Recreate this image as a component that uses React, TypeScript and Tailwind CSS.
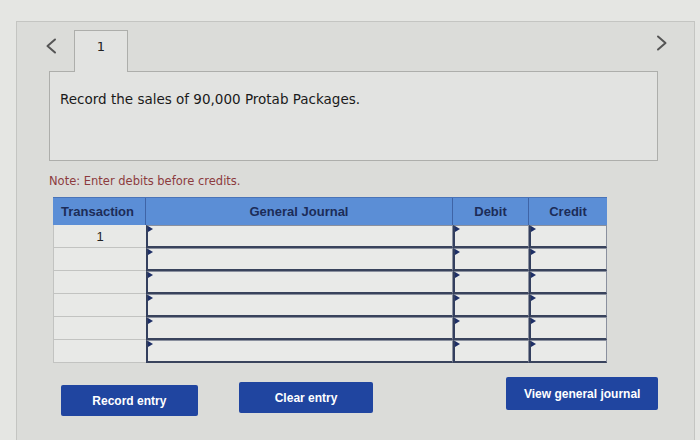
import React from "react";

const Tri = () => (
  <span className="absolute left-0 top-0 w-0 h-0 border-t-[3px] border-b-[3px] border-l-[5px] border-t-transparent border-b-transparent border-l-[#1e2f66]" />
);

function InputCell({ w }: { w: string }) {
  return (
    <div className={`${w} relative h-full bg-[#e9eae8] border-l-2 border-b-2 border-t border-r border-l-[#333f5e] border-b-[#39435c] border-t-[#8a909e] border-r-[#8a909e]`}>
      <Tri />
    </div>
  );
}

export default function App() {
  const rows = [0, 1, 2, 3, 4, 5];
  return (
    <div className="w-[700px] h-[440px] bg-[#e5e6e3] pt-[21px] pl-[16px] pr-[5px] overflow-hidden" style={{ fontFamily: '"DejaVu Sans", Verdana, sans-serif' }}>
      <div className="relative h-full bg-[#dbdcd9] border-l border-t border-r border-[#c4c5c2] pl-[32px] pr-[36px]">
        <div className="h-[49px] flex items-end">
          <svg className="-ml-[4px] mb-[17px] mr-[17px]" width="12" height="16" viewBox="0 0 12 16" fill="none">
            <path d="M10 1.5 L2.5 8 L10 14.5" stroke="#555" strokeWidth="2" strokeLinecap="round" strokeLinejoin="round" />
          </svg>
          <div className="w-[54px] h-[42px] -mb-px relative z-10 bg-[#e2e3e1] border-l border-t border-r border-[#adaeab] flex justify-center pt-[6px] text-[13px] text-[#222]">
            1
          </div>
        </div>
        <svg className="absolute right-[26px] top-[13px]" width="12" height="16" viewBox="0 0 12 16" fill="none">
          <path d="M2 1.5 L9.5 8 L2 14.5" stroke="#555" strokeWidth="2" strokeLinecap="round" strokeLinejoin="round" />
        </svg>
        <div className="h-[90px] bg-[#e2e3e1] border border-[#adaeab] pl-[10px] pt-[17px] text-[13.5px] text-[#1a1a1a]">
          Record the sales of 90,000 Protab Packages.
        </div>
        <div className="mt-[12px] text-[11.5px] text-[#8c3b3e]">Note: Enter debits before credits.</div>
        <div className="ml-[4px] mt-[7px] w-[554px]" style={{ fontFamily: '"Liberation Sans", Arial, sans-serif' }}>
          <div className="flex h-[28px] bg-[#5b8ed6] border-t border-[#4a74b8] text-[13px] font-bold text-[#1c2c58]">
            <div className="w-[93px] pl-[8px] flex items-center border-r border-[#3f64a6]">Transaction</div>
            <div className="w-[307px] flex items-center justify-center border-r border-[#3f64a6]">General Journal</div>
            <div className="w-[76px] flex items-center justify-center border-r border-[#3f64a6]">Debit</div>
            <div className="w-[78px] flex items-center justify-center">Credit</div>
          </div>
          {rows.map((r) => (
            <div key={r} className="flex h-[23px]">
              <div className="w-[93px] h-full bg-[#e8e9e7] border-l border-b border-[#c2c3c1] flex items-center justify-center text-[13px] text-[#222]">
                {r === 0 ? "1" : ""}
              </div>
              <InputCell w="w-[307px]" />
              <InputCell w="w-[76px]" />
              <InputCell w="w-[78px]" />
            </div>
          ))}
        </div>
        <div className="mt-[18px] flex items-start text-[12px] font-bold text-white" style={{ fontFamily: '"Liberation Sans", Arial, sans-serif' }}>
          <div className="ml-[12px] mt-[4px] w-[138px] h-[31px] bg-[#2045a0] rounded-[2px] flex items-center justify-center">Record entry</div>
          <div className="ml-[41px] mt-[1px] w-[136px] h-[31px] bg-[#2045a0] rounded-[2px] flex items-center justify-center">Clear entry</div>
          <div className="ml-[133px] -mt-[4px] w-[153px] h-[33px] bg-[#2045a0] rounded-[2px] flex items-center justify-center">View general journal</div>
        </div>
      </div>
    </div>
  );
}
